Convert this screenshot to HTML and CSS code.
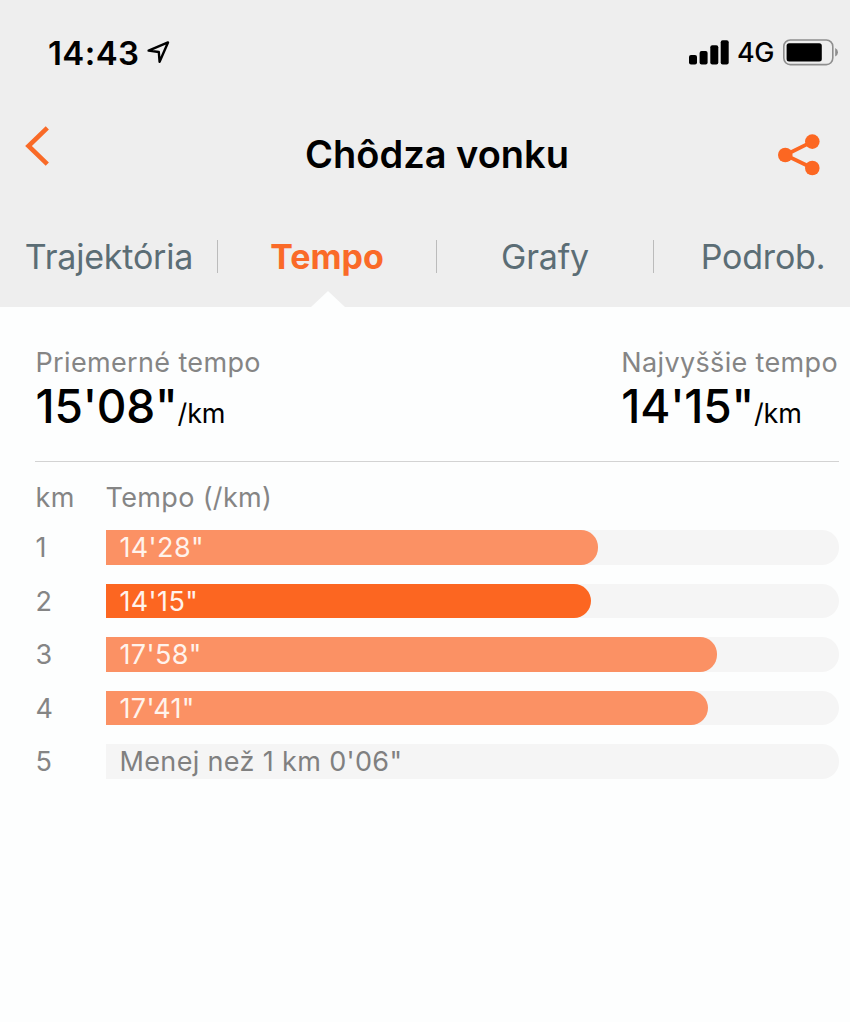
FILE: index.html
```html
<!DOCTYPE html>
<html lang="sk">
<head>
    <meta charset="UTF-8">
    <meta name="viewport" content="width=device-width, initial-scale=1.0">
    <title>Chôdza vonku</title>
    <link rel="stylesheet" href="styles.css">
</head>
<body>
    <header>
        <div class="status-bar">
            <span class="clock">14:43</span>
            <svg class="location" width="24" height="24" viewBox="0 0 24 24">
                <path d="M1.6 10.6 L21 2.4 L12.6 21.8 L11.8 12 Z" fill="none" stroke="#000" stroke-width="2.4" stroke-linejoin="round"/>
            </svg>
            <svg class="signal" width="40" height="25" viewBox="0 0 40 25">
                <rect x="0" y="15" width="8" height="9.5" rx="2"/>
                <rect x="10.6" y="11" width="8" height="13.5" rx="2"/>
                <rect x="21.3" y="5.3" width="8" height="19.2" rx="2"/>
                <rect x="31.7" y="0.2" width="8" height="24.3" rx="2"/>
            </svg>
            <span class="network">4G</span>
            <svg class="battery" width="56" height="27" viewBox="0 0 56 27">
                <rect x="0.8" y="1" width="49" height="24.6" rx="6.5" fill="none" stroke="#8e8e8e" stroke-width="1.6"/>
                <rect x="3.6" y="4.2" width="35.2" height="18.2" rx="2.5"/>
                <path d="M52.2 9 Q55 10.5 55 13.3 Q55 16 52.2 17.6 Z" fill="#8e8e8e"/>
            </svg>
        </div>
        <div class="title-bar">
            <svg class="back" width="24" height="40" viewBox="0 0 24 40">
                <path d="M22.3 1.9 L3.5 20 L22.3 38.1" fill="none" stroke="#f96a27" stroke-width="4.6"/>
            </svg>
            <h1>Chôdza vonku</h1>
            <svg class="share" width="42" height="42" viewBox="0 0 42 42">
                <path d="M34.3 7.6 L7.3 21 L34.3 34" fill="none" stroke="#fc6722" stroke-width="3.8"/>
                <circle cx="7.3" cy="21" r="7.3"/>
                <circle cx="34.3" cy="7.6" r="7.3"/>
                <circle cx="34.3" cy="34" r="7.3"/>
            </svg>
        </div>
        <nav>
            <div class="tab">Trajektória</div>
            <div class="tab active">Tempo</div>
            <div class="tab">Grafy</div>
            <div class="tab last">Podrob.</div>
        </nav>
    </header>
    <main>
        <div class="summary">
            <div class="stat">
                <div class="label">Priemerné tempo</div>
                <div class="value">15'08"<span class="unit">/km</span></div>
            </div>
            <div class="stat">
                <div class="label">Najvyššie tempo</div>
                <div class="value">14'15"<span class="unit">/km</span></div>
            </div>
        </div>
        <div class="row heading">
            <span class="km">km</span>
            <span class="pace">Tempo (/km)</span>
        </div>
        <div class="row">
            <span class="km">1</span>
            <div class="track"><div class="bar" style="width: 67.1%">14'28"</div></div>
        </div>
        <div class="row">
            <span class="km">2</span>
            <div class="track"><div class="bar top" style="width: 66.2%">14'15"</div></div>
        </div>
        <div class="row">
            <span class="km">3</span>
            <div class="track"><div class="bar" style="width: 83.3%">17'58"</div></div>
        </div>
        <div class="row">
            <span class="km">4</span>
            <div class="track"><div class="bar" style="width: 82.1%">17'41"</div></div>
        </div>
        <div class="row">
            <span class="km">5</span>
            <div class="track"><div class="bar rest">Menej než 1 km 0'06"</div></div>
        </div>
    </main>
</body>
</html>
```
FILE: styles.css
```css
* {
    box-sizing: border-box;
}

body {
    margin: 0;
    min-height: 100vh;
    background-color: #fdfefe;
    font-family: Inter, "Liberation Sans", sans-serif;
    overflow: hidden;
}

header {
    height: 307px;
    background-color: #eeeeee;
}

.status-bar {
    display: flex;
    align-items: center;
    height: 104px;
    padding: 0 11px 0 48px;
}

.clock {
    padding-top: 1px;
    font-size: 33px;
    font-weight: 600;
    letter-spacing: 0.4px;
}

.location {
    margin-left: 8px;
}

.signal {
    margin-left: auto;
}

.network {
    margin: 1px 9px 0 8px;
    font-size: 27px;
    font-weight: 500;
    letter-spacing: -0.5px;
}

.title-bar {
    display: flex;
    align-items: center;
    height: 102px;
    padding: 0 30px 0 25px;
}

.back {
    margin-bottom: 18px;
}

h1 {
    flex: 1;
    margin: 0 0 3px 47px;
    font-size: 38px;
    font-weight: 600;
    text-align: center;
}

.share {
    fill: #fc6722;
}

nav {
    display: flex;
    width: 872px;
    height: 101px;
}

.tab {
    position: relative;
    width: 218px;
    line-height: 102px;
    font-size: 34px;
    letter-spacing: -0.2px;
    text-align: center;
    color: #5b6d75;
}

.tab::after {
    content: "";
    position: absolute;
    top: 34px;
    right: 0;
    width: 1px;
    height: 33px;
    background-color: #bbbbbb;
}

.tab.last::after {
    display: none;
}

.tab.active {
    color: #fa6a28;
    font-weight: 700;
    letter-spacing: 0;
}

.tab.active::after {
    right: -1px;
}

.tab.active::before {
    content: "";
    position: absolute;
    left: 93px;
    bottom: 0;
    border: 17px solid transparent;
    border-top: none;
    border-bottom: 16px solid #fdfefe;
}

main {
    padding: 38px 11px 0 35px;
    color: #858585;
    font-size: 27px;
    letter-spacing: 0.35px;
}

.summary {
    display: flex;
    justify-content: space-between;
    height: 117px;
    padding: 0 1px 0 0.5px;
    border-bottom: 1px solid #d3d3d3;
}

.label {
    line-height: 36px;
    white-space: nowrap;
}

.value {
    line-height: 51px;
    color: #000;
    font-size: 46px;
    font-weight: 500;
    letter-spacing: -0.2px;
    white-space: nowrap;
}

.unit {
    font-size: 27px;
    font-weight: 400;
}

.row {
    display: flex;
    height: 34.6px;
    margin-bottom: 19px;
    line-height: 36.5px;
}

.heading {
    height: 68px;
    margin-bottom: 0;
    line-height: 72px;
}

.km {
    width: 70.5px;
    padding-left: 0.5px;
}

.track {
    flex: 1;
    background-color: #f5f5f5;
    border-radius: 0 17px 17px 0;
}

.bar {
    height: 100%;
    padding-left: 14px;
    border-radius: 0 17px 17px 0;
    background-color: #fb9164;
    color: #fff3ec;
}

.bar.top {
    background-color: #fc6621;
}

.bar.rest {
    background-color: transparent;
    color: #808080;
}
```
